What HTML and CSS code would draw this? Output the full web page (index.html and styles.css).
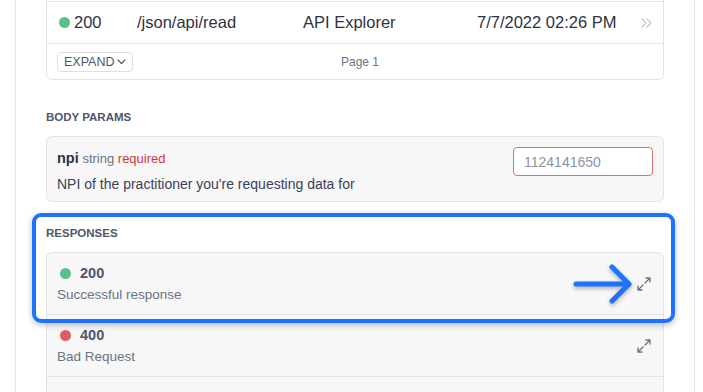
FILE: index.html
```html
<!DOCTYPE html>
<html lang="en">

<head>
  <meta charset="UTF-8">
  <meta name="viewport" content="width=device-width, initial-scale=1.0">
  <title>API Reference</title>
  <link rel="stylesheet" href="styles.css">
</head>

<body>
  <div class="panel">
    <div class="card log">
      <div class="log-head"></div>
      <div class="log-row">
        <div class="col-status"><span class="dot green"></span>200</div>
        <div class="col-path">/json/api/read</div>
        <div class="col-app">API Explorer</div>
        <div class="col-date">7/7/2022 02:26 PM</div>
        <svg class="more" width="12" height="10" viewBox="0 0 12 10">
          <path d="M1 1l4 4-4 4M6 1l4 4-4 4" fill="none" stroke="#c3c7cf" stroke-width="1.3" stroke-linecap="round" stroke-linejoin="round"/>
        </svg>
      </div>
      <div class="log-foot">
        <div><button class="expand-button">EXPAND
          <svg width="9" height="6" viewBox="0 0 9 6"><path d="M1 1l3.5 3.5L8 1" fill="none" stroke="#4f566b" stroke-width="1.1" stroke-linecap="round" stroke-linejoin="round"/></svg>
        </button></div>
        <div class="page">Page 1</div>
        <div></div>
      </div>
    </div>

    <h4 class="section-title params-title">Body Params</h4>
    <div class="card param">
      <div class="param-info">
        <div class="param-name"><b>npi</b> <span class="type">string</span> <span class="req">required</span></div>
        <div class="param-desc">NPI of the practitioner you're requesting data for</div>
      </div>
      <input class="param-input" type="text" placeholder="1124141650">
    </div>

    <div class="responses">
      <h4 class="section-title">Responses</h4>
      <div class="card response-list">
        <div class="response">
          <div>
            <div class="code"><span class="dot green"></span>200</div>
            <div class="response-desc">Successful response</div>
          </div>
          <svg class="expand-icon" width="16" height="16" viewBox="0 0 16 16">
            <path d="M9 7l5-5M10 2h4v4M7 9l-5 5M2 10v4h4" fill="none" stroke="#6b7385" stroke-width="1.3" stroke-linecap="round" stroke-linejoin="round"/>
          </svg>
        </div>
        <div class="response">
          <div>
            <div class="code"><span class="dot red"></span>400</div>
            <div class="response-desc">Bad Request</div>
          </div>
          <svg class="expand-icon" width="16" height="16" viewBox="0 0 16 16">
            <path d="M9 7l5-5M10 2h4v4M7 9l-5 5M2 10v4h4" fill="none" stroke="#6b7385" stroke-width="1.3" stroke-linecap="round" stroke-linejoin="round"/>
          </svg>
        </div>
        <div class="response empty"></div>
      </div>

      <!-- annotation over the first response -->
      <div class="highlight"></div>
      <svg class="pointer" width="66" height="44" viewBox="0 0 66 44">
        <path d="M6 22H59M42 5l17 17-17 17" fill="none" stroke="#1f72fb" stroke-width="5" stroke-linecap="round" stroke-linejoin="round"/>
      </svg>
    </div>
  </div>
</body>

</html>
```

FILE: styles.css
```css
body {
  margin: 0;
  font-family: "Liberation Sans", Arial, sans-serif;
  color: #3c4257;
  background-color: #fff;
  overflow: hidden;
}

.panel {
  box-sizing: border-box;
  width: 680px;
  min-height: 460px;
  margin-left: 15px;
  padding: 0 30px;
  border-left: 1px solid #e6e6e6;
  border-right: 1px solid #e6e6e6;
}

.card {
  border: 1px solid #e3e3e3;
  border-radius: 6px;
}

.log {
  margin-top: -40px;
}

.log-head {
  height: 40px;
  border-bottom: 1px solid #e6e6e6;
}

.log-row {
  display: flex;
  align-items: center;
  height: 41px;
  padding-left: 12px;
  border-bottom: 1px solid #e6e6e6;
  font-size: 16.5px;
  color: #2f3340;
}

.col-status {
  display: flex;
  align-items: center;
  width: 78px;
}

.col-path {
  width: 166px;
}

.col-app {
  width: 174px;
}

.col-date {
  flex: 1;
}

.more {
  margin-right: 10px;
}

.dot {
  display: inline-block;
  width: 11px;
  height: 11px;
  border-radius: 50%;
  margin-right: 4px;
}

.dot.green {
  background-color: #5bbf8a;
}

.dot.red {
  background-color: #dd5f5f;
}

.log-foot {
  display: grid;
  grid-template-columns: 1fr auto 1fr;
  align-items: center;
  height: 35px;
  padding-left: 10px;
}

.expand-button {
  display: flex;
  align-items: center;
  gap: 3px;
  height: 20px;
  padding: 0 6px;
  border: 1px solid #e0e0e0;
  border-radius: 4px;
  background-color: #fff;
  font-family: inherit;
  font-size: 12.5px;
  color: #4f566b;
}

.page {
  font-size: 12px;
  color: #6b7385;
}

.section-title {
  margin: 30px 0 12px;
  font-size: 11.5px;
  line-height: 14px;
  font-weight: bold;
  text-transform: uppercase;
  color: #4f566b;
}

.param {
  display: flex;
  justify-content: space-between;
  align-items: flex-start;
  padding: 12px 10px 8px 10px;
  background-color: #f7f7f7;
}

.param-name {
  line-height: 18px;
  font-size: 13px;
}

.param-name b {
  font-size: 14.5px;
  color: #2f3340;
}

.type {
  color: #6b7385;
}

.req {
  color: #d0393e;
}

.param-desc {
  margin-top: 7px;
  line-height: 18px;
  font-size: 14px;
  color: #3c4257;
}

.param-input {
  box-sizing: border-box;
  width: 140px;
  height: 29px;
  margin-top: -2px;
  padding: 0 10px;
  border: 1px solid #e06c6c;
  border-radius: 4px;
  font-family: inherit;
  font-size: 14px;
}

.param-input::placeholder {
  color: #8c94a4;
}

.responses {
  position: relative;
}

.responses .section-title {
  margin-top: 24px;
}

.response-list {
  background-color: #f7f7f7;
  overflow: hidden;
}

.response {
  display: flex;
  justify-content: space-between;
  align-items: center;
  padding: 11px 11px 10px 10px;
  border-bottom: 1px solid #e3e3e3;
}

.response.empty {
  height: 40px;
  border-bottom: none;
}

.code {
  display: flex;
  align-items: center;
  line-height: 18px;
  font-size: 14.5px;
  font-weight: bold;
  color: #4f566b;
}

.code .dot {
  margin-left: 3px;
  margin-right: 9px;
}

.response-desc {
  margin-top: 4px;
  line-height: 18px;
  font-size: 13.5px;
  color: #6b7385;
}

.highlight {
  position: absolute;
  top: -13px;
  left: -14px;
  right: -11px;
  height: 110px;
  box-sizing: border-box;
  border: 4.5px solid #1f72fb;
  border-radius: 9px;
  box-shadow: 0 2px 6px rgba(0, 0, 0, 0.25);
}

.pointer {
  position: absolute;
  top: 36px;
  left: 524px;
  filter: drop-shadow(0 2px 2px rgba(0, 0, 0, 0.3));
}
```
